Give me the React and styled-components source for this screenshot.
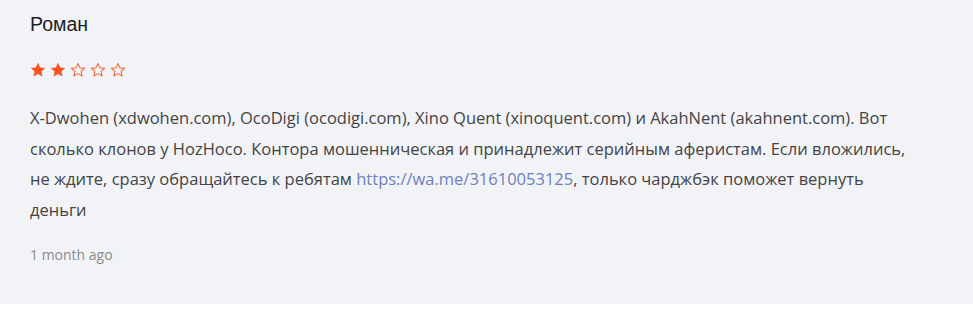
import React from "react";
import styled, { createGlobalStyle } from "styled-components";

const Global = createGlobalStyle`
  html, body {
    margin: 0;
    padding: 0;
    background: #ffffff;
  }
`;

const Card = styled.div`
  box-sizing: border-box;
  width: 973px;
  height: 304px;
  background: #f2f3f7;
  padding: 12px 30px 0 30px;
  box-shadow: 0 2px 3px rgba(0, 0, 0, 0.04);
`;

const Author = styled.div`
  font-family: "Liberation Sans", Arial, sans-serif;
  font-size: 19.5px;
  line-height: 24px;
  color: #1d1d1f;
`;

const Stars = styled.div`
  display: flex;
  gap: 4px;
  margin-top: 26px;
  height: 16px;
`;

const Text = styled.p`
  margin: 25px 0 0 0;
  max-width: 885px;
  font-family: "Open Sans", sans-serif;
  font-size: 16.5px;
  line-height: 30.7px;
  color: #444;
`;

const Link = styled.a`
  color: #6f80bd;
  text-decoration: none;
`;

const Date = styled.div`
  margin-top: 20px;
  font-family: "Open Sans", sans-serif;
  font-size: 14px;
  line-height: 18px;
  color: #8a8a8a;
`;

const Star = ({ filled }) => (
  <svg width="16" height="16" viewBox="0 0 24 24">
    <path
      d="M12 2.2l2.9 6.6 7.1.6-5.4 4.7 1.6 7-6.2-3.7-6.2 3.7 1.6-7L2 9.4l7.1-.6z"
      fill={filled ? "#f4511e" : "none"}
      stroke="#f4511e"
      strokeWidth={filled ? 1 : 1.6}
      strokeLinejoin="round"
      opacity={filled ? 1 : 0.85}
    />
  </svg>
);

export default function App() {
  const rating = 2;
  return (
    <>
      <Global />
      <Card>
        <Author>Роман</Author>
        <Stars>
          {[1, 2, 3, 4, 5].map((n) => (
            <Star key={n} filled={n <= rating} />
          ))}
        </Stars>
        <Text>
          X-Dwohen (xdwohen.com), OcoDigi (ocodigi.com), Xino Quent (xinoquent.com) и AkahNent
          (akahnent.com). Вот сколько клонов у HozHoco. Контора мошенническая и принадлежит
          серийным аферистам. Если вложились, не ждите, сразу обращайтесь к ребятам{" "}
          <Link href="#">https://wa.me/31610053125</Link>, только чарджбэк поможет вернуть деньги
        </Text>
        <Date>1 month ago</Date>
      </Card>
    </>
  );
}
